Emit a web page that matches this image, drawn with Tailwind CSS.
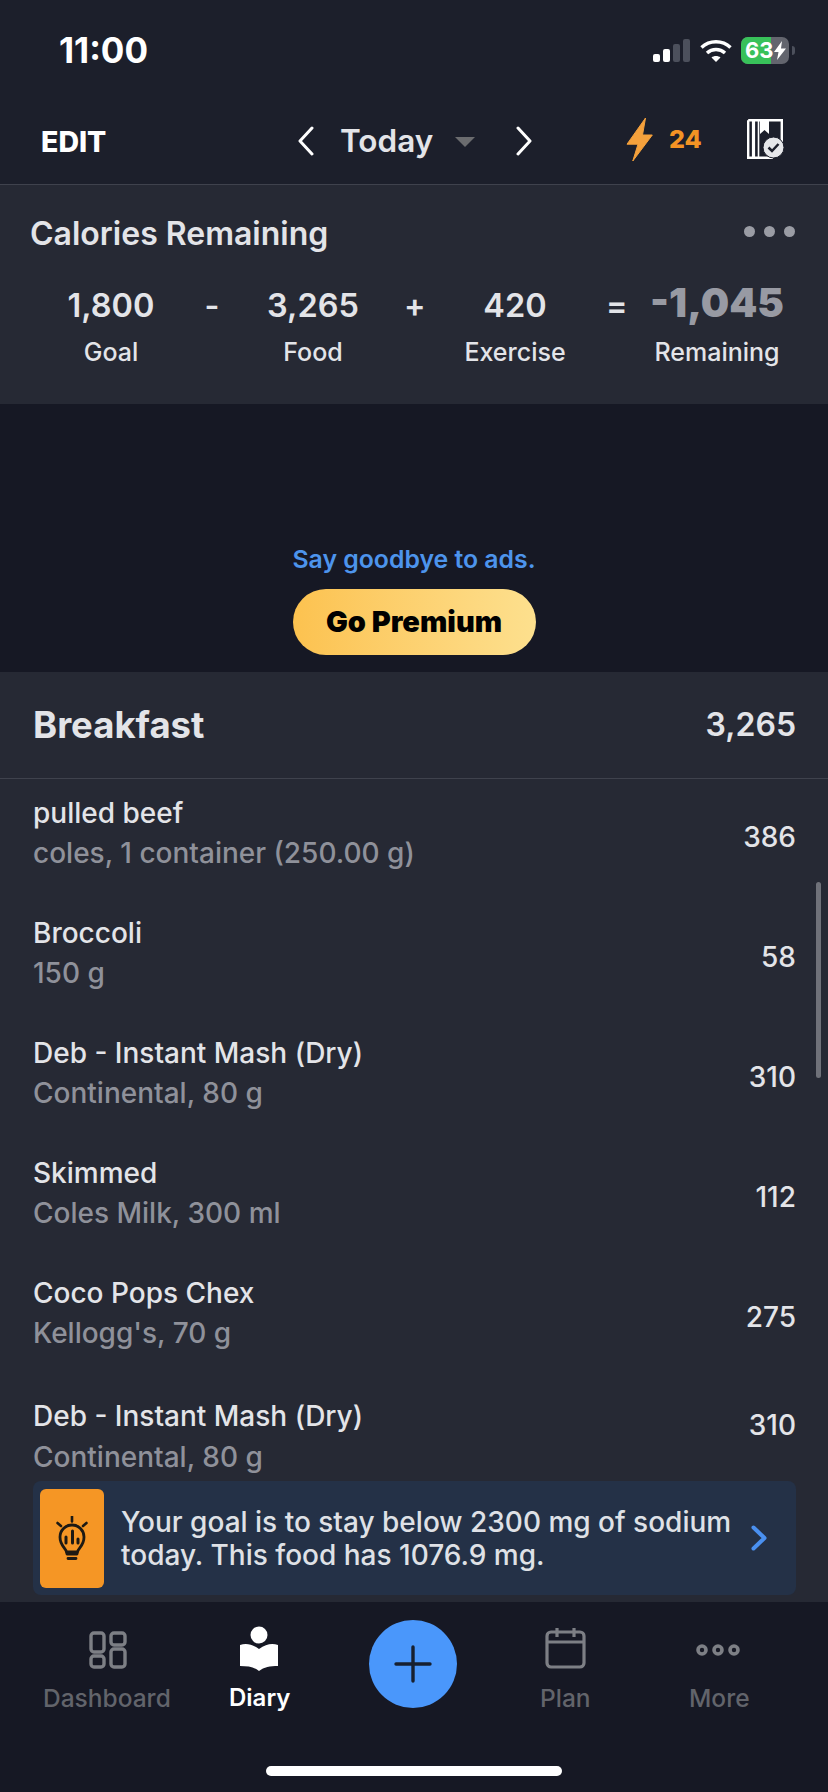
<!DOCTYPE html>
<html><head><meta charset="utf-8">
<script src="https://cdn.jsdelivr.net/npm/@tailwindcss/browser@4"></script>
</head>
<body class="m-0 bg-[#161824]">
<div class="relative w-[828px] h-[1792px] overflow-hidden flex flex-col font-['Inter','Liberation_Sans',sans-serif] bg-[#262934]">
  <!-- top -->
  <header class="h-[185px] shrink-0 bg-[#1c1f2b] border-b border-[#3f424d] flex flex-col">
    <div class="h-[100px] shrink-0 flex items-center justify-between pl-[59px] pr-[33px] pt-[1px]">
      <span class="text-[35px] leading-none font-bold text-white">11:00</span>
      <div class="flex items-center">
        <div class="flex items-end gap-[3px] h-[23px] mr-[10px]">
          <div class="w-[7px] h-[8px] rounded-[2px] bg-white"></div>
          <div class="w-[7px] h-[13px] rounded-[2px] bg-white"></div>
          <div class="w-[7px] h-[18px] rounded-[2px] bg-[#4c505c]"></div>
          <div class="w-[7px] h-[23px] rounded-[2px] bg-[#4c505c]"></div>
        </div>
        <svg class="w-[32px] h-[24px] mr-[9px]" viewBox="0 0 32 24" fill="none" stroke="#fff" stroke-width="3.4"><path d="M1.5 8.5C9.5 .8 22.5 .8 30.5 8.5"/><path d="M7 14c5-4.6 13-4.6 18 0"/><path d="M16 23l-4.5-4.6c2.4-2 6.6-2 9 0z" fill="#fff" stroke="none"/></svg>
        <div class="flex items-center">
          <div class="relative w-[48px] h-[27px] rounded-[7px] overflow-hidden bg-[#63656e] flex">
            <div class="w-[30px] h-full bg-[#38c15a]"></div>
            <span class="absolute left-[4px] top-0 text-[22px] leading-[27px] font-bold text-white">63</span>
            <svg class="absolute left-[33px] top-[4px] w-[12px] h-[19px]" viewBox="0 0 12 19" fill="#fff"><path d="M8 0 0 11h4.500L3 19l9-11.500H7z"/></svg>
          </div>
          <div class="w-[3px] h-[9px] rounded-r-[3px] bg-[#4c505c] ml-[3px]"></div>
        </div>
      </div>
    </div>
    <nav class="flex-1 relative flex items-center pl-[41px]">
      <span class="text-[28.500px] font-extrabold text-white leading-none">EDIT</span>
      <div class="absolute left-[297px] top-[25px] flex items-center">
        <svg class="w-[18px] h-[30px]" viewBox="0 0 18 30" fill="none" stroke="#fff" stroke-width="3" stroke-linecap="round" stroke-linejoin="round"><path d="M15 2 3 15l12 13"/></svg>
        <span class="ml-[25px] text-[31.500px] leading-none font-semibold text-[#e3e4e8]">Today</span>
        <div class="ml-[22px] w-0 h-0 border-x-[10px] border-x-transparent border-t-[10px] border-t-[#6b6c6f] mt-[2px]"></div>
        <svg class="ml-[40px] w-[18px] h-[30px]" viewBox="0 0 18 30" fill="none" stroke="#fff" stroke-width="3" stroke-linecap="round" stroke-linejoin="round"><path d="M3 2l12 13L3 28"/></svg>
      </div>
      <div class="absolute left-[626px] top-[17px] flex items-center">
        <svg class="w-[27px] h-[45px]" viewBox="0 0 27 45" fill="#f5a13c" stroke="#f5a13c" stroke-width="1" stroke-linejoin="round"><path d="M19.500 1 1 27.200h11L6.800 44 26.300 18H16.500z"/></svg>
        <span class="ml-[16px] text-[25px] leading-none font-extrabold text-[#f39324]">24</span>
      </div>
      <svg class="absolute left-[747px] top-[19px] w-[38px] h-[40px]" viewBox="0 0 38 40" fill="none"><path d="M1.200 1.200H34.800V24M1.200 1.200V38.800H26" stroke="#fff" stroke-width="2.400"/><path d="M6.500 1.200V38.800" stroke="#fff" stroke-width="3.200"/><path d="M11.500 1.200V38.800" stroke="#fff" stroke-width="1.600"/><path d="M13 1h9v14l-4.500-4-4.500 4z" fill="#fff"/><circle cx="26.500" cy="28.500" r="10.500" fill="#e6e7ea" stroke="#1c1f2b" stroke-width="1"/><path d="M21.500 28.500l3.500 3.500 6.500-7" stroke="#1c1f2b" stroke-width="2.500" fill="none"/></svg>
    </nav>
  </header>

  <!-- calories card -->
  <section class="h-[219px] shrink-0 bg-[#262934] pt-[29px]">
    <div class="flex items-center justify-between pl-[30px] pr-[33px] h-[40px]">
      <span class="text-[32px] leading-none font-semibold text-[#e3e4e8]">Calories Remaining</span>
      <div class="flex gap-[9px] mb-[5px]">
        <div class="w-[11px] h-[11px] rounded-full bg-[#9a9ca4]"></div>
        <div class="w-[11px] h-[11px] rounded-full bg-[#9a9ca4]"></div>
        <div class="w-[11px] h-[11px] rounded-full bg-[#9a9ca4]"></div>
      </div>
    </div>
    <div class="grid grid-cols-[202px_0_202px_0_202px_0_202px] ml-[10px] mt-[28px] text-center">
      <div><div class="h-[48px] flex items-center justify-center text-[32.500px] font-semibold text-[#e3e4e8] leading-none">1,800</div><div class="mt-[7px] text-[25px] leading-[30px] font-medium text-[#e3e4e8]">Goal</div></div>
      <div class="relative"><span class="absolute left-[-10px] w-[20px] top-[6px] text-[32px] leading-[36px] font-semibold text-[#e3e4e8]">-</span></div>
      <div><div class="h-[48px] flex items-center justify-center text-[32.500px] font-semibold text-[#e3e4e8] leading-none">3,265</div><div class="mt-[7px] text-[25px] leading-[30px] font-medium text-[#e3e4e8]">Food</div></div>
      <div class="relative"><span class="absolute left-[-10px] w-[20px] top-[6px] text-[32px] leading-[36px] font-semibold text-[#e3e4e8]">+</span></div>
      <div><div class="h-[48px] flex items-center justify-center text-[32.500px] font-semibold text-[#e3e4e8] leading-none">420</div><div class="mt-[7px] text-[25px] leading-[30px] font-medium text-[#e3e4e8]">Exercise</div></div>
      <div class="relative"><span class="absolute left-[-10px] w-[20px] top-[6px] text-[32px] leading-[36px] font-semibold text-[#e3e4e8]">=</span></div>
      <div><div class="h-[48px] flex items-center justify-center text-[40px] font-black text-[#989aa3] leading-none pb-[6px]">-1,045</div><div class="mt-[7px] text-[25px] leading-[30px] font-medium text-[#e3e4e8]">Remaining</div></div>
    </div>
  </section>

  <!-- ad -->
  <section class="h-[268px] shrink-0 bg-[#161824] flex flex-col items-center pt-[140px]">
    <div class="text-[24.800px] leading-[30px] font-semibold text-[#4d94ec]">Say goodbye to ads.</div>
    <div class="mt-[15px] w-[243px] h-[66px] rounded-full bg-gradient-to-r from-[#fcc24f] to-[#fde08e] flex items-center justify-center text-[29px] font-black text-black">Go Premium</div>
  </section>

  <!-- diary -->
  <section class="h-[107px] shrink-0 bg-[#262934] border-b border-[#3f424d] flex items-center justify-between pl-[33px] pr-[32px]">
    <span class="text-[36.500px] leading-none font-bold text-[#e3e4e8]">Breakfast</span>
    <span class="text-[32px] leading-none font-semibold text-[#e3e4e8]">3,265</span>
  </section>
  <section class="h-[823px] shrink-0 overflow-hidden relative">
    <div class="h-[120px] flex items-center justify-between pl-[33px] pr-[32px] pb-[12px]"><div><div class="text-[28px] leading-[40px] font-medium text-[#e3e4e8]">pulled beef</div><div class="text-[28px] leading-[40px] font-medium text-[#8f919a]">coles, 1 container (250.00 g)</div></div><span class="text-[28px] font-medium text-[#e3e4e8] mt-[7px]">386</span></div>
    <div class="h-[120px] flex items-center justify-between pl-[33px] pr-[32px] pb-[12px]"><div><div class="text-[28px] leading-[40px] font-medium text-[#e3e4e8]">Broccoli</div><div class="text-[28px] leading-[40px] font-medium text-[#8f919a]">150 g</div></div><span class="text-[28px] font-medium text-[#e3e4e8] mt-[7px]">58</span></div>
    <div class="h-[120px] flex items-center justify-between pl-[33px] pr-[32px] pb-[12px]"><div><div class="text-[28px] leading-[40px] font-medium text-[#e3e4e8]">Deb - Instant Mash (Dry)</div><div class="text-[28px] leading-[40px] font-medium text-[#8f919a]">Continental, 80 g</div></div><span class="text-[28px] font-medium text-[#e3e4e8] mt-[7px]">310</span></div>
    <div class="h-[120px] flex items-center justify-between pl-[33px] pr-[32px] pb-[12px]"><div><div class="text-[28px] leading-[40px] font-medium text-[#e3e4e8]">Skimmed</div><div class="text-[28px] leading-[40px] font-medium text-[#8f919a]">Coles Milk, 300 ml</div></div><span class="text-[28px] font-medium text-[#e3e4e8] mt-[7px]">112</span></div>
    <div class="h-[120px] flex items-center justify-between pl-[33px] pr-[32px] pb-[12px]"><div><div class="text-[28px] leading-[40px] font-medium text-[#e3e4e8]">Coco Pops Chex</div><div class="text-[28px] leading-[40px] font-medium text-[#8f919a]">Kellogg's, 70 g</div></div><span class="text-[28px] font-medium text-[#e3e4e8] mt-[7px]">275</span></div>
    <div class="h-[120px] flex items-center justify-between pl-[33px] pr-[32px] pb-[4px]"><div><div class="text-[28px] leading-[40px] font-medium text-[#e3e4e8]">Deb - Instant Mash (Dry)</div><div class="text-[28px] leading-[43px] font-medium text-[#8f919a]">Continental, 80 g</div></div><span class="text-[28px] font-medium text-[#e3e4e8] mb-[24px]">310</span></div>
    <!-- scrollbar -->
    <div class="absolute left-[816px] top-[103px] w-[5px] h-[196px] rounded-full bg-[#6f7179]"></div>
    <!-- tip banner -->
    <div class="absolute left-[33px] top-[702px] w-[763px] h-[114px] rounded-[8px] bg-[#243147] flex items-center pl-[7px]">
      <div class="w-[64px] h-[99px] rounded-[6px] bg-[#f59625] flex items-center justify-center">
        <svg class="w-[32px] h-[44px]" viewBox="0 0 32 44" fill="none" stroke="#1d1a14" stroke-width="2.600" stroke-linecap="round"><path d="M16 .5v5M1.500 7l3.500 3M30.500 7l-3.500 3"/><path d="M10.500 36C10 32 4 30 4 21a12 12 0 0 1 24 0c0 9-6 11-6.500 15z" stroke-width="2.800"/><path d="M10 21v6M16.500 15v12M22 23v4" stroke-width="3"/><path d="M11 38h10M12 42.500h8" stroke-width="2.800"/></svg>
      </div>
      <div class="ml-[17px] w-[630px] pt-[2px] text-[28px] leading-[33px] font-medium text-[#dfe1e6] whitespace-nowrap">Your goal is to stay below 2300 mg of sodium<br>today. This food has 1076.9 mg.</div>
      <svg class="w-[16px] h-[26px]" viewBox="0 0 16 26" fill="none" stroke="#4a90f0" stroke-width="4" stroke-linecap="round" stroke-linejoin="round"><path d="M2.500 2.500 13.500 13 2.500 23.500"/></svg>
    </div>
  </section>

  <!-- tab bar -->
  <footer class="relative flex-1 bg-[#161824]">
    <svg class="absolute left-[89px] top-[29px] w-[38px] h-[38px]" viewBox="0 0 38 38" fill="none" stroke="#7d7f85" stroke-width="3.400"><rect x="2" y="2" width="13" height="19" rx="3"/><rect x="22" y="2" width="14" height="12" rx="3"/><rect x="2" y="25" width="13" height="11" rx="3"/><rect x="22" y="18" width="14" height="18" rx="3"/></svg>
    <div class="absolute left-[43px] top-[81px] text-[24.500px] leading-[30px] font-medium text-[#62646b]">Dashboard</div>
    <svg class="absolute left-[240px] top-[24px] w-[38px] h-[46px]" viewBox="0 0 38 46" fill="#fff"><circle cx="19" cy="9" r="8.500"/><path d="M0 19c6-2 12-1 19 4 7-5 13-6 19-4v21c-8 0-14 1-19 5C14 41 8 40 0 40z"/></svg>
    <div class="absolute left-[229px] top-[81px] text-[24px] leading-[30px] font-semibold text-white">Diary</div>
    <div class="absolute left-[369px] top-[18px] w-[88px] h-[88px] rounded-full bg-[#4a97fb] flex items-center justify-center">
      <svg class="w-[38px] h-[38px]" viewBox="0 0 38 38" stroke="#17202f" stroke-width="3.400" stroke-linecap="round"><path d="M19 2v34M2 19h34"/></svg>
    </div>
    <svg class="absolute left-[545px] top-[25px] w-[41px] h-[42px]" viewBox="0 0 41 42" fill="none" stroke="#7d7f85" stroke-width="3.200"><rect x="2" y="5" width="37" height="35" rx="4"/><path d="M2 15h37M12 1v9M29 1v9"/></svg>
    <div class="absolute left-[540px] top-[81px] text-[24.500px] leading-[30px] font-medium text-[#62646b]">Plan</div>
    <svg class="absolute left-[695px] top-[41px] w-[46px] h-[14px]" viewBox="0 0 46 14" fill="none" stroke="#7d7f85" stroke-width="3.600"><circle cx="7" cy="7" r="4"/><circle cx="23" cy="7" r="4"/><circle cx="39" cy="7" r="4"/></svg>
    <div class="absolute left-[689px] top-[81px] text-[24.500px] leading-[30px] font-medium text-[#62646b]">More</div>
    <div class="absolute left-[266px] top-[164px] w-[296px] h-[10px] rounded-full bg-white"></div>
  </footer>
</div>
</body></html>
